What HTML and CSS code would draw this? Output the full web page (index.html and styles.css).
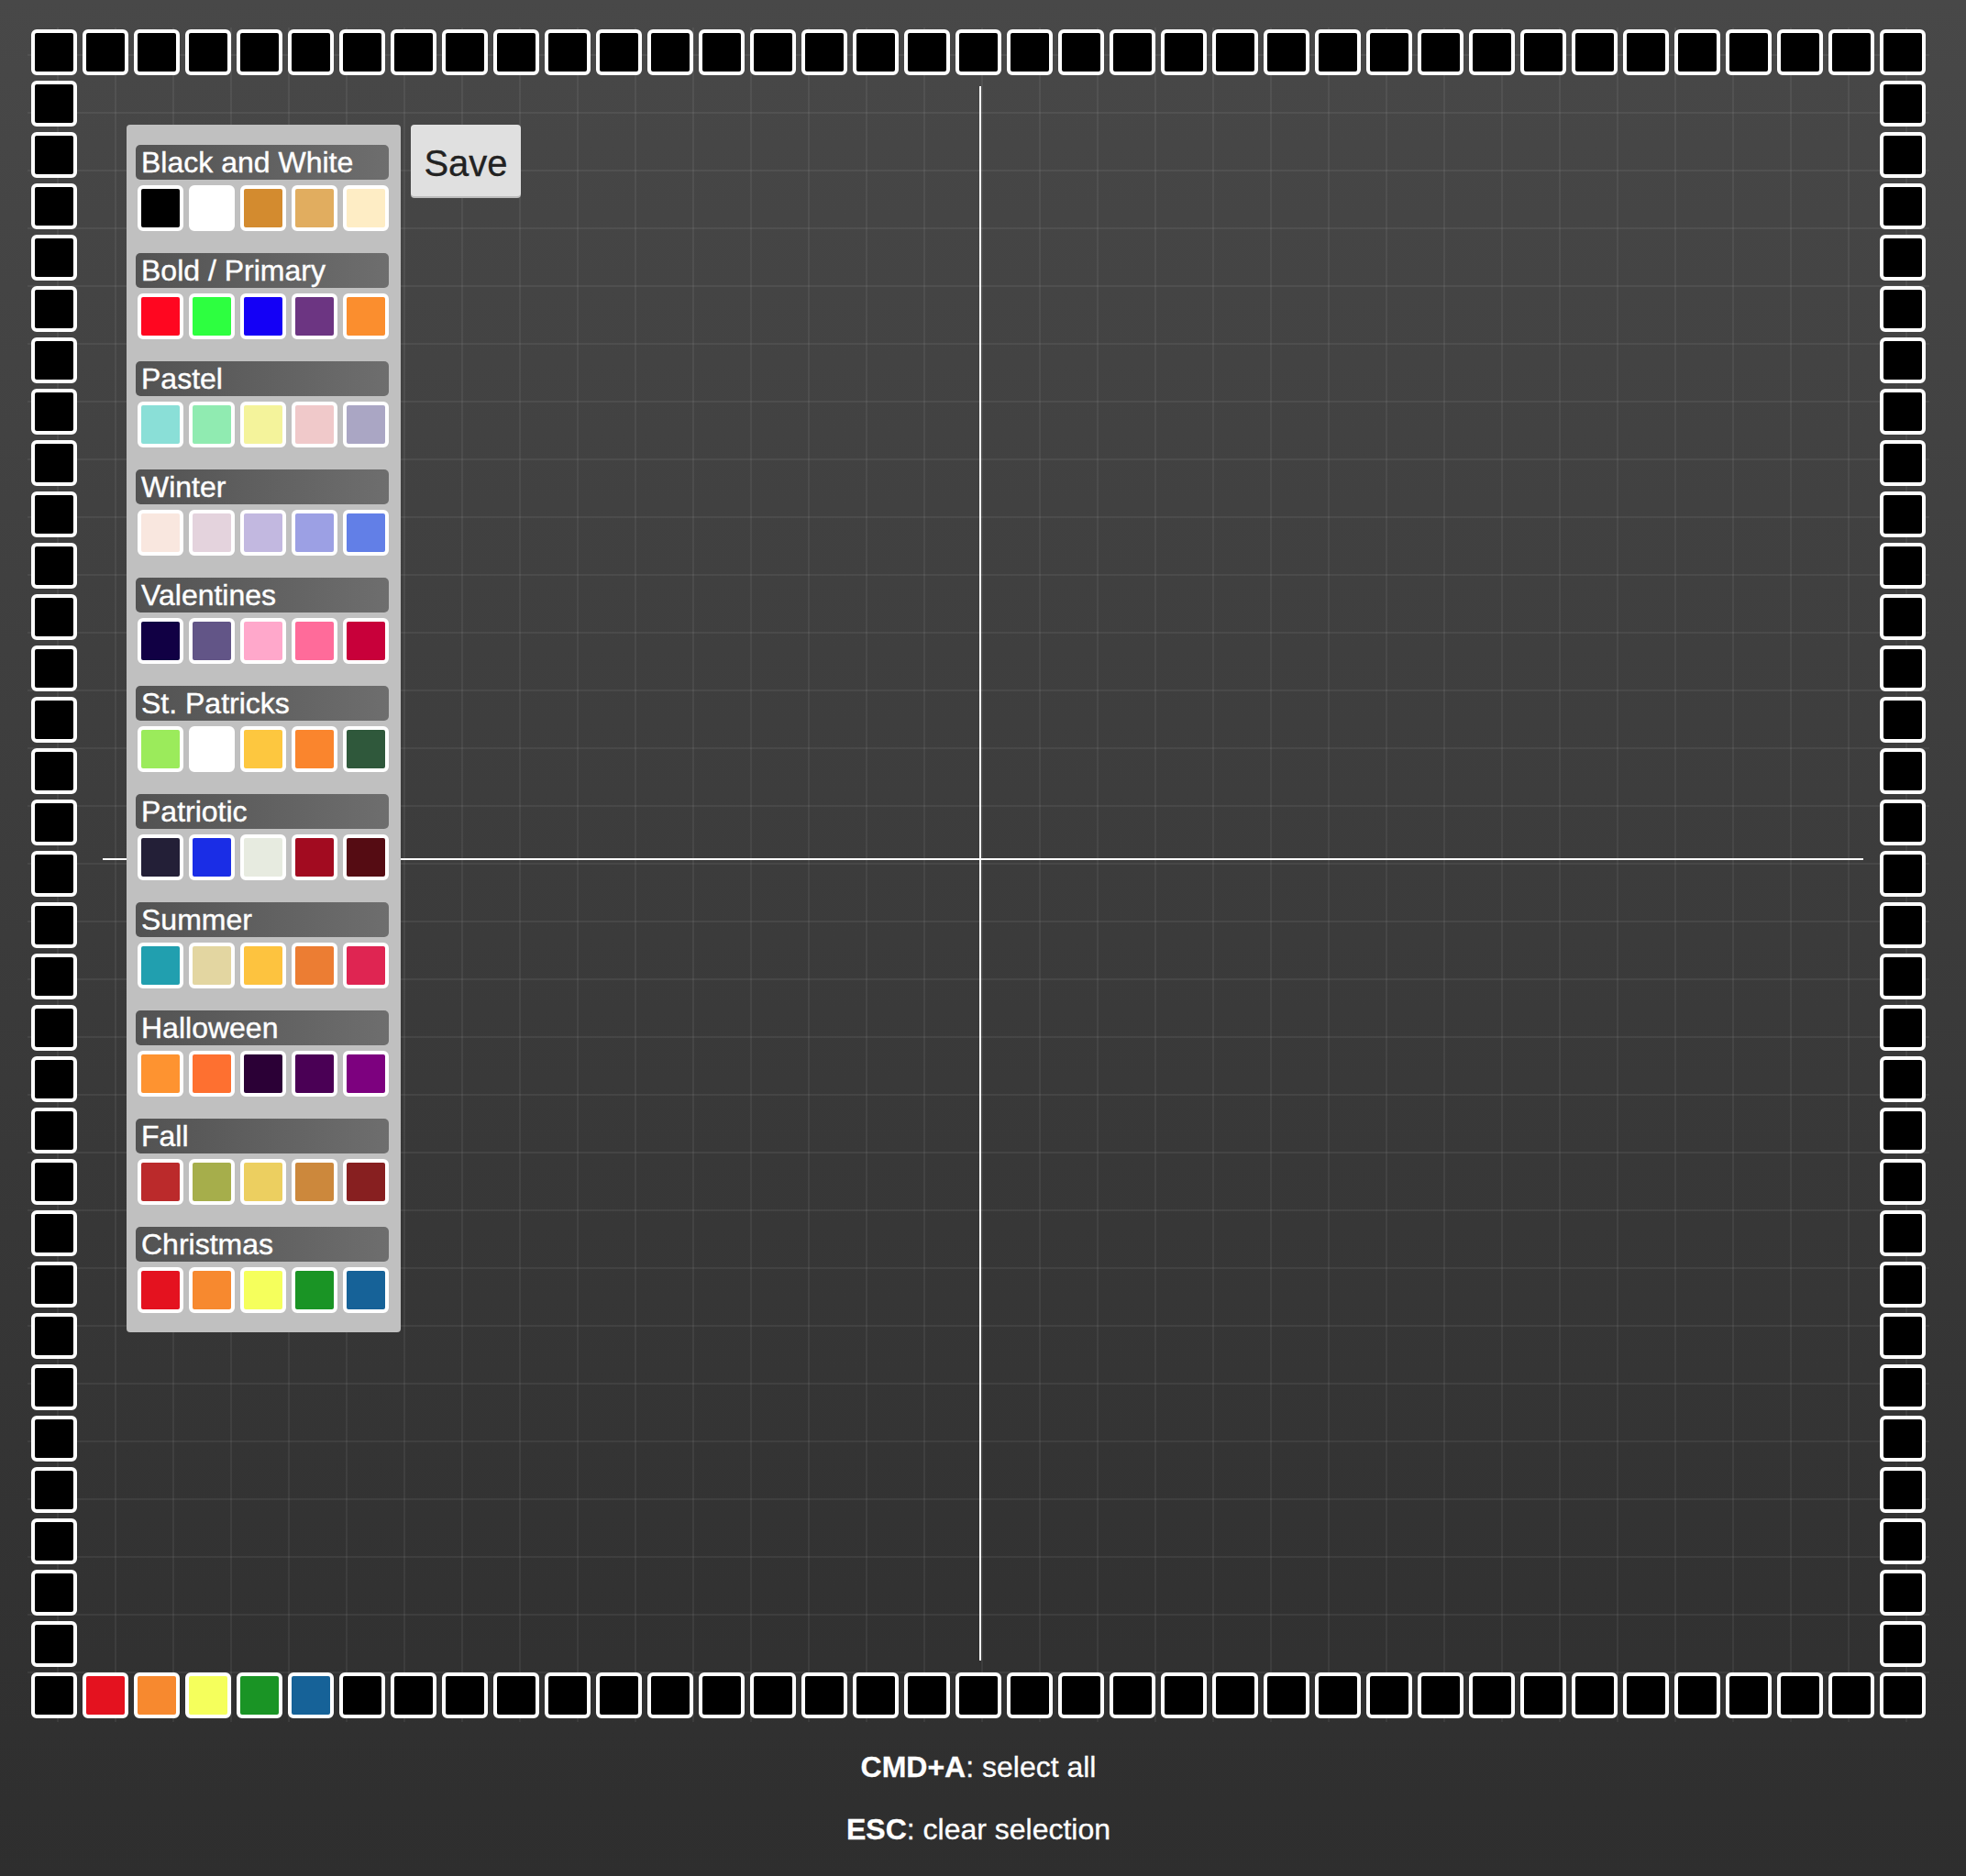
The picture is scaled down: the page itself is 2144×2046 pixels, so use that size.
FILE: index.html
```html
<!DOCTYPE html>
<html lang="en">
<head>
<meta charset="utf-8">
<title>Pixel Board</title>
<link rel="stylesheet" href="styles.css">
</head>
<body>
<div class="app">
  <div class="canvas">
    <div class="board">
      <div class="row">
        <span class="cell"></span><span class="cell"></span><span class="cell"></span><span class="cell"></span><span class="cell"></span><span class="cell"></span><span class="cell"></span><span class="cell"></span><span class="cell"></span><span class="cell"></span>
        <span class="cell"></span><span class="cell"></span><span class="cell"></span><span class="cell"></span><span class="cell"></span><span class="cell"></span><span class="cell"></span><span class="cell"></span><span class="cell"></span><span class="cell"></span>
        <span class="cell"></span><span class="cell"></span><span class="cell"></span><span class="cell"></span><span class="cell"></span><span class="cell"></span><span class="cell"></span><span class="cell"></span><span class="cell"></span><span class="cell"></span>
        <span class="cell"></span><span class="cell"></span><span class="cell"></span><span class="cell"></span><span class="cell"></span><span class="cell"></span><span class="cell"></span>
      </div>
      <div class="middle">
        <div class="col">
          <span class="cell"></span><span class="cell"></span><span class="cell"></span><span class="cell"></span><span class="cell"></span><span class="cell"></span><span class="cell"></span><span class="cell"></span><span class="cell"></span><span class="cell"></span>
          <span class="cell"></span><span class="cell"></span><span class="cell"></span><span class="cell"></span><span class="cell"></span><span class="cell"></span><span class="cell"></span><span class="cell"></span><span class="cell"></span><span class="cell"></span>
          <span class="cell"></span><span class="cell"></span><span class="cell"></span><span class="cell"></span><span class="cell"></span><span class="cell"></span><span class="cell"></span><span class="cell"></span><span class="cell"></span><span class="cell"></span>
          <span class="cell"></span>
        </div>
        <div class="interior">
          <div class="vline"></div>
          <div class="hline"></div>
          <div class="panel">
            <div class="palette">
              <div class="title">Black and White</div>
              <div class="swatches">
                <span class="cell" style="background:#000000"></span><span class="cell" style="background:#ffffff"></span><span class="cell" style="background:#d38b2f"></span><span class="cell" style="background:#e1ad5f"></span><span class="cell" style="background:#feedc5"></span>
              </div>
            </div>
            <div class="palette">
              <div class="title">Bold / Primary</div>
              <div class="swatches">
                <span class="cell" style="background:#ff0620"></span><span class="cell" style="background:#2dff40"></span><span class="cell" style="background:#1400f6"></span><span class="cell" style="background:#6c3582"></span><span class="cell" style="background:#fb8e2e"></span>
              </div>
            </div>
            <div class="palette">
              <div class="title">Pastel</div>
              <div class="swatches">
                <span class="cell" style="background:#8adfd7"></span><span class="cell" style="background:#90ebb1"></span><span class="cell" style="background:#f4f39b"></span><span class="cell" style="background:#f0c9ca"></span><span class="cell" style="background:#aaa6c4"></span>
              </div>
            </div>
            <div class="palette">
              <div class="title">Winter</div>
              <div class="swatches">
                <span class="cell" style="background:#f9e7df"></span><span class="cell" style="background:#e4d3dd"></span><span class="cell" style="background:#c2b8e0"></span><span class="cell" style="background:#9ca0e4"></span><span class="cell" style="background:#627fe7"></span>
              </div>
            </div>
            <div class="palette">
              <div class="title">Valentines</div>
              <div class="swatches">
                <span class="cell" style="background:#110044"></span><span class="cell" style="background:#625587"></span><span class="cell" style="background:#ffa8cb"></span><span class="cell" style="background:#ff6b9a"></span><span class="cell" style="background:#c8003a"></span>
              </div>
            </div>
            <div class="palette">
              <div class="title">St. Patricks</div>
              <div class="swatches">
                <span class="cell" style="background:#9beb5b"></span><span class="cell" style="background:#ffffff"></span><span class="cell" style="background:#fdc73f"></span><span class="cell" style="background:#fa852d"></span><span class="cell" style="background:#2f583b"></span>
              </div>
            </div>
            <div class="palette">
              <div class="title">Patriotic</div>
              <div class="swatches">
                <span class="cell" style="background:#231f37"></span><span class="cell" style="background:#1a2de6"></span><span class="cell" style="background:#e7ebe0"></span><span class="cell" style="background:#a20b20"></span><span class="cell" style="background:#550c13"></span>
              </div>
            </div>
            <div class="palette">
              <div class="title">Summer</div>
              <div class="swatches">
                <span class="cell" style="background:#219faf"></span><span class="cell" style="background:#e3d6a1"></span><span class="cell" style="background:#fdc33f"></span><span class="cell" style="background:#ec7d33"></span><span class="cell" style="background:#df2552"></span>
              </div>
            </div>
            <div class="palette">
              <div class="title">Halloween</div>
              <div class="swatches">
                <span class="cell" style="background:#fe9330"></span><span class="cell" style="background:#fe7030"></span><span class="cell" style="background:#2b0036"></span><span class="cell" style="background:#4a0055"></span><span class="cell" style="background:#7d017f"></span>
              </div>
            </div>
            <div class="palette">
              <div class="title">Fall</div>
              <div class="swatches">
                <span class="cell" style="background:#bb2a2b"></span><span class="cell" style="background:#a6ae4b"></span><span class="cell" style="background:#eccf60"></span><span class="cell" style="background:#cc883c"></span><span class="cell" style="background:#871f20"></span>
              </div>
            </div>
            <div class="palette">
              <div class="title">Christmas</div>
              <div class="swatches">
                <span class="cell" style="background:#e4121f"></span><span class="cell" style="background:#f7892f"></span><span class="cell" style="background:#f5ff5c"></span><span class="cell" style="background:#1a9425"></span><span class="cell" style="background:#166298"></span>
              </div>
            </div>
          </div>
          <button class="save" type="button">Save</button>
        </div>
        <div class="col">
          <span class="cell"></span><span class="cell"></span><span class="cell"></span><span class="cell"></span><span class="cell"></span><span class="cell"></span><span class="cell"></span><span class="cell"></span><span class="cell"></span><span class="cell"></span>
          <span class="cell"></span><span class="cell"></span><span class="cell"></span><span class="cell"></span><span class="cell"></span><span class="cell"></span><span class="cell"></span><span class="cell"></span><span class="cell"></span><span class="cell"></span>
          <span class="cell"></span><span class="cell"></span><span class="cell"></span><span class="cell"></span><span class="cell"></span><span class="cell"></span><span class="cell"></span><span class="cell"></span><span class="cell"></span><span class="cell"></span>
          <span class="cell"></span>
        </div>
      </div>
      <div class="row">
        <span class="cell"></span><span class="cell" style="background:#e4121f"></span><span class="cell" style="background:#f7892f"></span><span class="cell" style="background:#f5ff5c"></span><span class="cell" style="background:#1a9425"></span><span class="cell" style="background:#166298"></span><span class="cell"></span><span class="cell"></span><span class="cell"></span><span class="cell"></span>
        <span class="cell"></span><span class="cell"></span><span class="cell"></span><span class="cell"></span><span class="cell"></span><span class="cell"></span><span class="cell"></span><span class="cell"></span><span class="cell"></span><span class="cell"></span>
        <span class="cell"></span><span class="cell"></span><span class="cell"></span><span class="cell"></span><span class="cell"></span><span class="cell"></span><span class="cell"></span><span class="cell"></span><span class="cell"></span><span class="cell"></span>
        <span class="cell"></span><span class="cell"></span><span class="cell"></span><span class="cell"></span><span class="cell"></span><span class="cell"></span><span class="cell"></span>
      </div>
    </div>
  </div>
  <div class="help">
    <p><b>CMD+A</b>: select all</p>
    <p><b>ESC</b>: clear selection</p>
  </div>
</div>
</body>
</html>
```

FILE: styles.css
```css
html {
  height: 100%;
  background: linear-gradient(to bottom, #484848, #2e2e2e);
}

body {
  margin: 0;
  font-family: "Liberation Sans", Arial, Helvetica, sans-serif;
}

.app {
  width: 2074px;
  margin: 30px 0 0 30px;
}

.canvas {
  padding: 2px 4px 4px 4px;
  background-image:
    linear-gradient(to right, rgba(255, 255, 255, 0.06) 2px, transparent 2px),
    linear-gradient(to bottom, rgba(255, 255, 255, 0.06) 2px, transparent 2px);
  background-size: 63px 63px;
  background-position: 32px 29px;
}

.board {
  display: flex;
  flex-direction: column;
  gap: 6px;
}

.row {
  display: flex;
  gap: 6px;
}

.middle {
  display: flex;
  gap: 6px;
}

.col {
  display: flex;
  flex-direction: column;
  gap: 6px;
}

.cell {
  display: block;
  flex: none;
  width: 50px;
  height: 50px;
  box-sizing: border-box;
  border: 4px solid #ffffff;
  border-radius: 6px;
  background: #000000;
}

.interior {
  flex: 1;
  position: relative;
  box-sizing: border-box;
  padding: 48px;
  display: flex;
  align-items: flex-start;
  gap: 11px;
}

.vline {
  position: absolute;
  left: 978px;
  top: 6px;
  bottom: 7px;
  width: 2px;
  background: #ffffff;
}

.hline {
  position: absolute;
  top: 848px;
  left: 22px;
  right: 12px;
  height: 2px;
  background: #ffffff;
}

.panel {
  position: relative;
  z-index: 1;
  width: 299px;
  box-sizing: border-box;
  padding: 22px 13px 21px 10px;
  background: #c0c0c0;
  border-radius: 4px;
  display: flex;
  flex-direction: column;
  gap: 24px;
}

.title {
  height: 38px;
  line-height: 38px;
  padding-left: 6px;
  margin-bottom: 6px;
  color: #ffffff;
  font-size: 32px;
  -webkit-text-stroke: 0.4px #ffffff;
  border-radius: 5px;
  background: linear-gradient(to right, #525252, #6e6e6e);
  white-space: nowrap;
}

.swatches {
  display: flex;
  gap: 6px;
  padding-left: 2px;
}

.save {
  position: relative;
  z-index: 1;
  width: 120px;
  height: 78px;
  box-sizing: border-box;
  padding: 6px 0 0;
  border: 0;
  border-radius: 4px;
  background: #e0e0e0;
  box-shadow: 0 2px 0 #bcbcbc;
  color: #222222;
  font-family: inherit;
  font-size: 40px;
  line-height: 72px;
  text-align: center;
  -webkit-text-stroke: 0.3px #222222;
}

.help {
  padding: 0 4px;
  text-align: center;
  color: #ffffff;
  font-size: 32px;
  line-height: 36px;
  -webkit-text-stroke: 0.3px #ffffff;
}

.help p {
  margin: 32px 0 0;
}

.help p:first-child {
  margin-top: 31px;
}
```
